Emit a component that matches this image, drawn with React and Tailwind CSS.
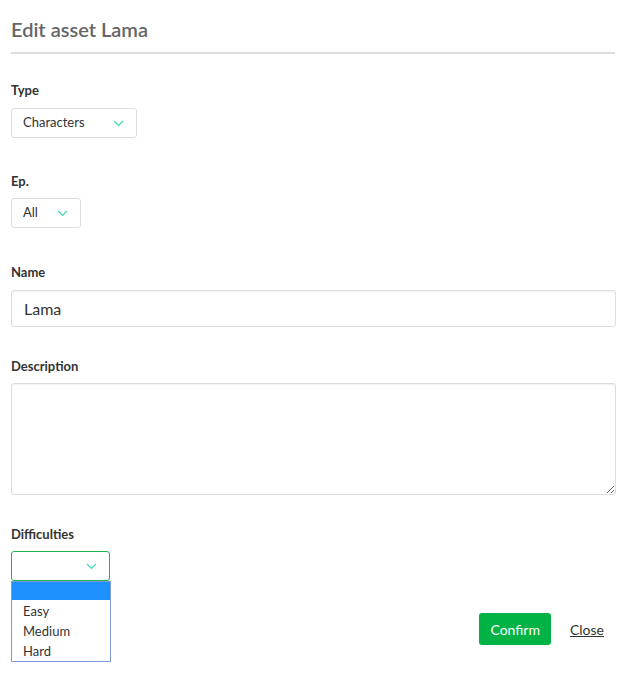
import React from 'react';

const Chevron = () => (
  <svg width="11" height="7" viewBox="0 0 11 7" className="shrink-0">
    <path d="M1 1l4.5 4.5L10 1" fill="none" stroke="#3fd9b4" strokeWidth="1.2" />
  </svg>
);

const Field = ({ label, className = '', children }) => (
  <div className={className}>
    <div className="text-[13px] font-bold leading-[18px] text-[#333]">{label}</div>
    {children}
  </div>
);

const Select = ({ value, width, gap = 'mt-[9px]', border = 'border-[#ddd]' }) => (
  <div className={`${gap} flex h-[30px] items-center justify-between rounded-[3px] border ${border} bg-white pl-[11px] pr-[12px] text-[13px] text-[#333] ${width}`}>
    <span>{value}</span>
    <Chevron />
  </div>
);

export default function App() {
  return (
    <div className="min-h-[674px] bg-white px-[11px] pt-[17px] font-['Lato','Open_Sans',sans-serif] text-[#333]">
      <h2 className="text-[20px] font-semibold leading-[24px] text-[#666]">Edit asset Lama</h2>
      <div className="mt-[11px] h-[2px] w-[604px] bg-[#ddd]" />

      <Field label="Type" className="mt-[27px]">
        <Select value="Characters" width="w-[126px]" />
      </Field>

      <Field label="Ep." className="mt-[34px]">
        <Select value="All" width="w-[70px]" gap="mt-[8px]" />
      </Field>

      <Field label="Name" className="mt-[35px]">
        <div className="mt-[9px] flex h-[37px] w-[605px] items-center rounded-[3px] border border-[#ddd] px-[12px] text-[16px] text-[#333] shadow-[inset_0_1px_2px_rgba(0,0,0,0.06)]">
          Lama
        </div>
      </Field>

      <Field label="Description" className="mt-[30px]">
        <textarea className="mt-[8px] block h-[112px] w-[605px] rounded-[3px] border border-[#ddd] shadow-[inset_0_1px_2px_rgba(0,0,0,0.06)] outline-none" />
      </Field>

      <div className="mt-[30px] flex items-start justify-between pr-[15px]">
        <Field label="Difficulties">
          <div className="relative">
            <Select value="" width="w-[99px]" gap="mt-[8px]" border="border-[#1db34f]" />
            <div className="w-[100px] border border-[#7a9cd3] bg-white text-[13px] leading-[20px] text-[#333]">
              <div className="h-[18px] bg-[#1e90ff]" />
              <div className="pl-[11px] pt-[1px]">Easy</div>
              <div className="pl-[11px]">Medium</div>
              <div className="pl-[11px]">Hard</div>
            </div>
          </div>
        </Field>
        <div className="mt-[88px] flex items-center gap-[19px]">
          <button className="h-[32px] rounded-[3px] bg-[#00b344] px-[11px] text-[14px] text-white">Confirm</button>
          <a className="text-[14px] text-[#333] underline">Close</a>
        </div>
      </div>
    </div>
  );
}
